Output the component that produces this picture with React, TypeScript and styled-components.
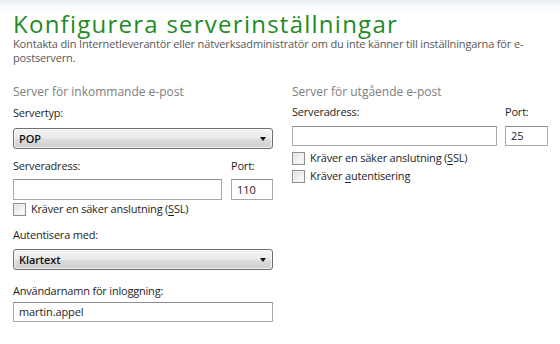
import styled, { createGlobalStyle } from "styled-components";

const GlobalStyle = createGlobalStyle`
  html, body {
    margin: 0;
    padding: 0;
    background: #ffffff;
  }
  body {
    font-family: "Open Sans", "Noto Sans", sans-serif;
    color: #1e1e1e;
  }
`;

const Page = styled.div`
  width: 560px;
  height: 344px;
  box-sizing: border-box;
  padding: 11px 13px 0 13px;
  background: linear-gradient(#e6edf1 0, #f6f9fa 6px, #ffffff 11px);
  overflow: hidden;
`;

const Title = styled.h1`
  margin: 0;
  font-size: 24px;
  line-height: 26px;
  font-weight: 400;
  letter-spacing: 1.25px;
  color: #1f8b25;
  white-space: nowrap;
`;

const Intro = styled.p`
  margin: 0;
  font-size: 11px;
  line-height: 14px;
  letter-spacing: -0.15px;
  color: #585858;
  white-space: nowrap;
`;

const Columns = styled.div`
  display: grid;
  grid-template-columns: 260px 256px;
  column-gap: 19px;
  margin-top: 19px;
`;

const Column = styled.div`
  display: flex;
  flex-direction: column;
`;

const SectionHeading = styled.div`
  font-size: 12px;
  line-height: 16px;
  color: #7d7d7d;
`;

const Label = styled.div<{ $gap?: number }>`
  margin-top: ${({ $gap }) => $gap ?? 0}px;
  font-size: 11px;
  line-height: 16px;
  letter-spacing: -0.2px;
  color: #1e1e1e;
`;

const Field = styled.div<{ $gap?: number }>`
  margin-top: ${({ $gap }) => $gap ?? 0}px;
`;

const AddressRow = styled.div<{ $gap?: number; $between: number; $port: number }>`
  display: grid;
  grid-template-columns: 1fr ${({ $port }) => $port}px;
  column-gap: ${({ $between }) => $between}px;
  margin-top: ${({ $gap }) => $gap ?? 0}px;
`;

const TextBox = styled.div<{ $height?: number }>`
  box-sizing: border-box;
  height: ${({ $height }) => $height ?? 20}px;
  padding: 0 5px;
  border: 1px solid #a9a9a9;
  border-top-color: #8e8e8e;
  background: #ffffff;
  font-size: 11px;
  line-height: ${({ $height }) => ($height ?? 20) - 2}px;
  letter-spacing: -0.1px;
  color: #1e1e1e;
`;

const Select = styled.div<{ $gap?: number }>`
  position: relative;
  box-sizing: border-box;
  height: 21px;
  margin-top: ${({ $gap }) => $gap ?? 0}px;
  padding: 0 5px;
  border: 1px solid #707070;
  border-radius: 3px;
  background: linear-gradient(#f2f2f2 0%, #ebebeb 48%, #dddddd 52%, #cfcfcf 100%);
  box-shadow: inset 0 0 0 1px rgba(255, 255, 255, 0.7);
  font-size: 11px;
  font-weight: 600;
  line-height: 19px;
  letter-spacing: -0.1px;
  color: #111111;
`;

const Arrow = styled.span`
  position: absolute;
  right: 6px;
  top: 8px;
  width: 0;
  height: 0;
  border-left: 3.5px solid transparent;
  border-right: 3.5px solid transparent;
  border-top: 4px solid #111111;
`;

const CheckRow = styled.label<{ $gap?: number }>`
  display: flex;
  align-items: center;
  gap: 5px;
  height: 16px;
  margin-top: ${({ $gap }) => $gap ?? 0}px;
  font-size: 11px;
  line-height: 16px;
  letter-spacing: -0.2px;
  color: #1e1e1e;
`;

const Box = styled.span`
  box-sizing: border-box;
  width: 13px;
  height: 13px;
  border: 1px solid #8f8f8f;
  background: linear-gradient(135deg, #dcdcdc 0%, #f4f4f4 60%, #ffffff 100%);
  box-shadow: inset 0 0 0 1px #f0f0f0;
  flex: none;
`;

const Key = styled.u`
  text-decoration-thickness: 1px;
  text-underline-offset: 2px;
`;

function Checkbox({ gap, children }: { gap?: number; children: React.ReactNode }) {
  return (
    <CheckRow $gap={gap}>
      <Box />
      <span>{children}</span>
    </CheckRow>
  );
}

export default function App() {
  return (
    <>
      <GlobalStyle />
      <Page>
        <Title>Konfigurera serverinställningar</Title>
        <Intro>
          Kontakta din Internetleverantör eller nätverksadministratör om du inte känner till
          inställningarna för e-
          <br />
          postservern.
        </Intro>

        <Columns>
          <Column>
            <SectionHeading>Server för inkommande e-post</SectionHeading>
            <Label $gap={5}>Servertyp:</Label>
            <Select $gap={7}>
              POP
              <Arrow />
            </Select>

            <AddressRow $gap={9} $between={9} $port={42}>
              <Label>Serveradress:</Label>
              <Label>Port:</Label>
            </AddressRow>
            <AddressRow $gap={5} $between={9} $port={42}>
              <TextBox $height={21} />
              <TextBox $height={21}>110</TextBox>
            </AddressRow>
            <Checkbox gap={1}>
              Kräver en säker anslutning (<Key>S</Key>SL)
            </Checkbox>

            <Label $gap={10}>Autentisera med:</Label>
            <Select $gap={6}>
              Klartext
              <Arrow />
            </Select>

            <Label $gap={13}>Användarnamn för inloggning:</Label>
            <Field $gap={3}>
              <TextBox>martin.appel</TextBox>
            </Field>
          </Column>

          <Column>
            <SectionHeading>Server för utgående e-post</SectionHeading>
            <AddressRow $gap={4} $between={8} $port={43}>
              <Label>Serveradress:</Label>
              <Label>Port:</Label>
            </AddressRow>
            <AddressRow $gap={6} $between={8} $port={43}>
              <TextBox />
              <TextBox>25</TextBox>
            </AddressRow>
            <Checkbox gap={4}>
              Kräver en säker anslutning (<Key>S</Key>SL)
            </Checkbox>
            <Checkbox gap={2}>
              Kräver <Key>a</Key>utentisering
            </Checkbox>
          </Column>
        </Columns>
      </Page>
    </>
  );
}
